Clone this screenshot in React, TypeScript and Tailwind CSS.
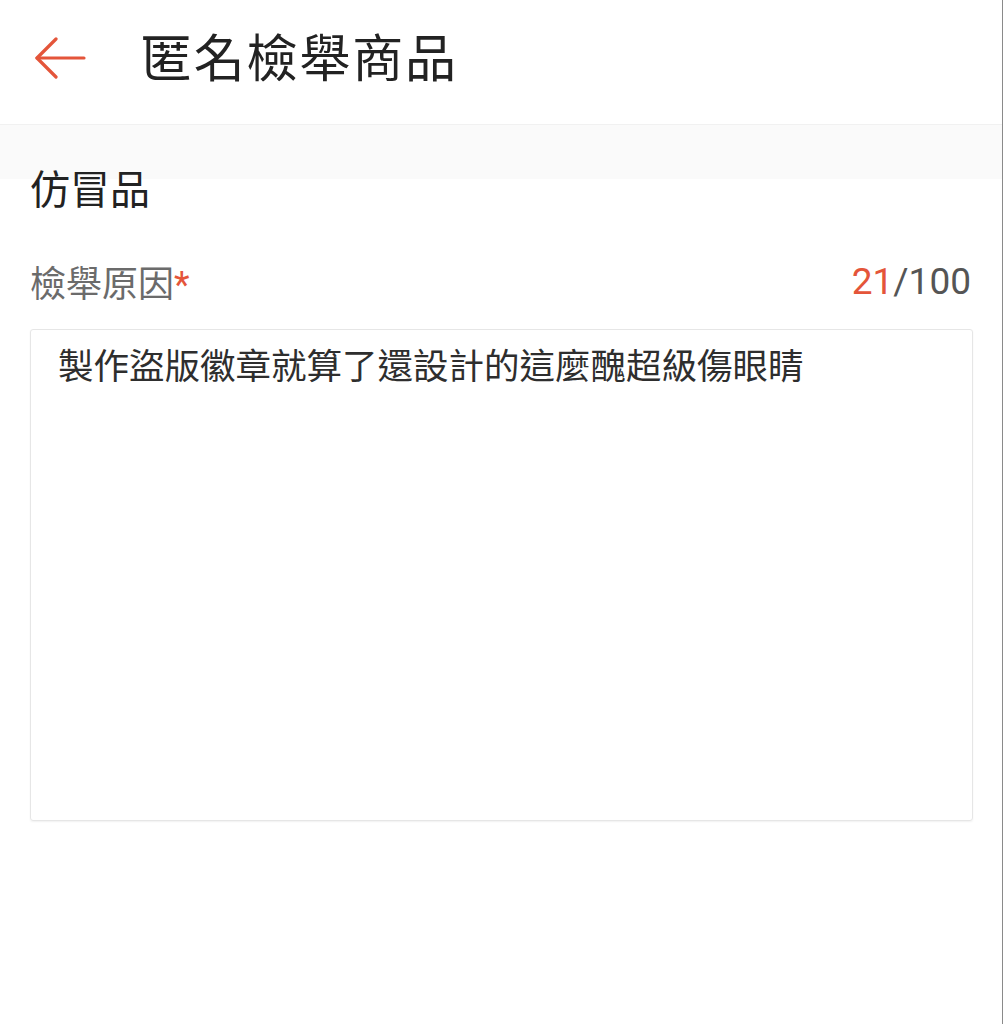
const cjk = "font-['Noto_Sans_CJK_TC','Noto_Sans',sans-serif]";

function BackArrow() {
  return (
    <svg width="52" height="42" viewBox="0 0 52 42" fill="none" stroke="#e4553a" strokeWidth="3.2" strokeLinecap="round" strokeLinejoin="round">
      <path d="M50 21H3" />
      <path d="M22 2L3 21l19 19" />
    </svg>
  );
}

export default function App() {
  return (
    <div className={`min-h-screen w-[1003px] bg-white border-r border-[#8a8a8a] ${cjk}`}>
      <header className="h-[124px] pb-[8px] flex items-center">
        <div className="ml-[34px] w-[52px] flex items-center">
          <BackArrow />
        </div>
        <h1 className="ml-[55px] mb-[6px] text-[51px] leading-none tracking-[1.8px] text-[#222] font-normal">
          匿名檢舉商品
        </h1>
      </header>

      <div className="border-t border-[#f1f1f1] bg-[linear-gradient(#fafafa_0,#fafafa_54px,#ffffff_54px)] px-[30px] pt-[42px]">
        <div className="text-[40px] leading-[40px] text-[#222]">仿冒品</div>

        <div className="mt-[55px] flex items-end justify-between pr-[1px]">
          <div className="text-[36px] leading-[38px] text-[#6b6b6b]">
            檢舉原因<span className="text-[#e4553a] font-['Roboto',sans-serif]">*</span>
          </div>
          <div className="pb-[3px] font-['Roboto',sans-serif] text-[37px] leading-[38px] text-[#555]">
            <span className="text-[#e4553a]">21</span>/100
          </div>
        </div>

        <div className="mt-[25px] h-[492px] w-[943px] rounded-[3px] border border-[#e6e6e6] shadow-[0_1px_2px_rgba(0,0,0,0.06)] pl-[27px] pt-[13px]">
          <p className="text-[35.5px] leading-[42px] text-[#2e2e2e]">
            製作盜版徽章就算了還設計的這麼醜超級傷眼睛
          </p>
        </div>
      </div>
    </div>
  );
}
